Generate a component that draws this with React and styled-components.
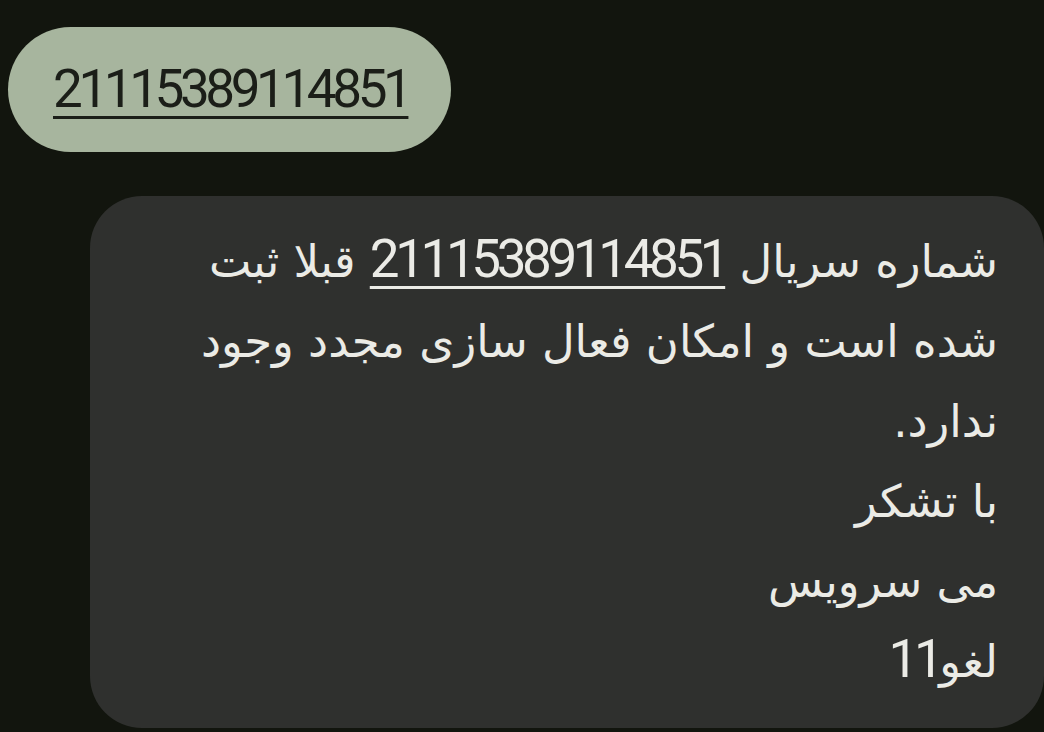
import styled, { createGlobalStyle } from 'styled-components';

const GlobalStyle = createGlobalStyle`
  html, body {
    margin: 0;
    padding: 0;
    background: #12150e;
  }
  body {
    font-family: Roboto, "DejaVu Sans", sans-serif;
    overflow: hidden;
  }
`;

const Screen = styled.main`
  width: 1044px;
  height: 732px;
  display: flex;
  flex-direction: column;
  align-items: flex-start;
  padding: 27px 0 0 8px;
  box-sizing: border-box;
  gap: 44px;
`;

const Sent = styled.div`
  background: #a7b59e;
  color: #1b1e18;
  border-radius: 63px;
  height: 125px;
  padding: 0 43px 0 45px;
  display: flex;
  align-items: center;
  box-sizing: border-box;
`;

const Number = styled.span`
  display: inline-block;
  font-family: Roboto, sans-serif;
  font-size: 53px;
  letter-spacing: -4.4px;
  text-decoration: ${(p) => (p.$plain ? 'none' : 'underline')};
  text-decoration-thickness: 3px;
  text-underline-offset: 9px;
  line-height: 1;
  direction: ltr;
`;

const Received = styled.div`
  align-self: flex-end;
  width: 954px;
  box-sizing: border-box;
  background: #2f302e;
  color: #ebebe6;
  border-radius: 52px;
  padding: 26px 46px 26px 40px;
`;

const Message = styled.p`
  margin: 0;
  direction: rtl;
  text-align: right;
  font-family: "DejaVu Sans", sans-serif;
  font-size: 45px;
  line-height: 80px;
`;

const Line = styled.span`
  display: block;
`;

export default function App() {
  const serial = '21115389114851';
  return (
    <>
      <GlobalStyle />
      <Screen>
        <Sent>
          <Number>{serial}</Number>
        </Sent>
        <Received>
          <Message>
            <Line>
              شماره سریال <Number>{serial}</Number> قبلا ثبت
            </Line>
            <Line>شده است و امکان فعال سازی مجدد وجود</Line>
            <Line>ندارد.</Line>
            <Line>با تشکر</Line>
            <Line>می سرویس</Line>
            <Line>
              لغو<Number $plain>11</Number>
            </Line>
          </Message>
        </Received>
      </Screen>
    </>
  );
}
